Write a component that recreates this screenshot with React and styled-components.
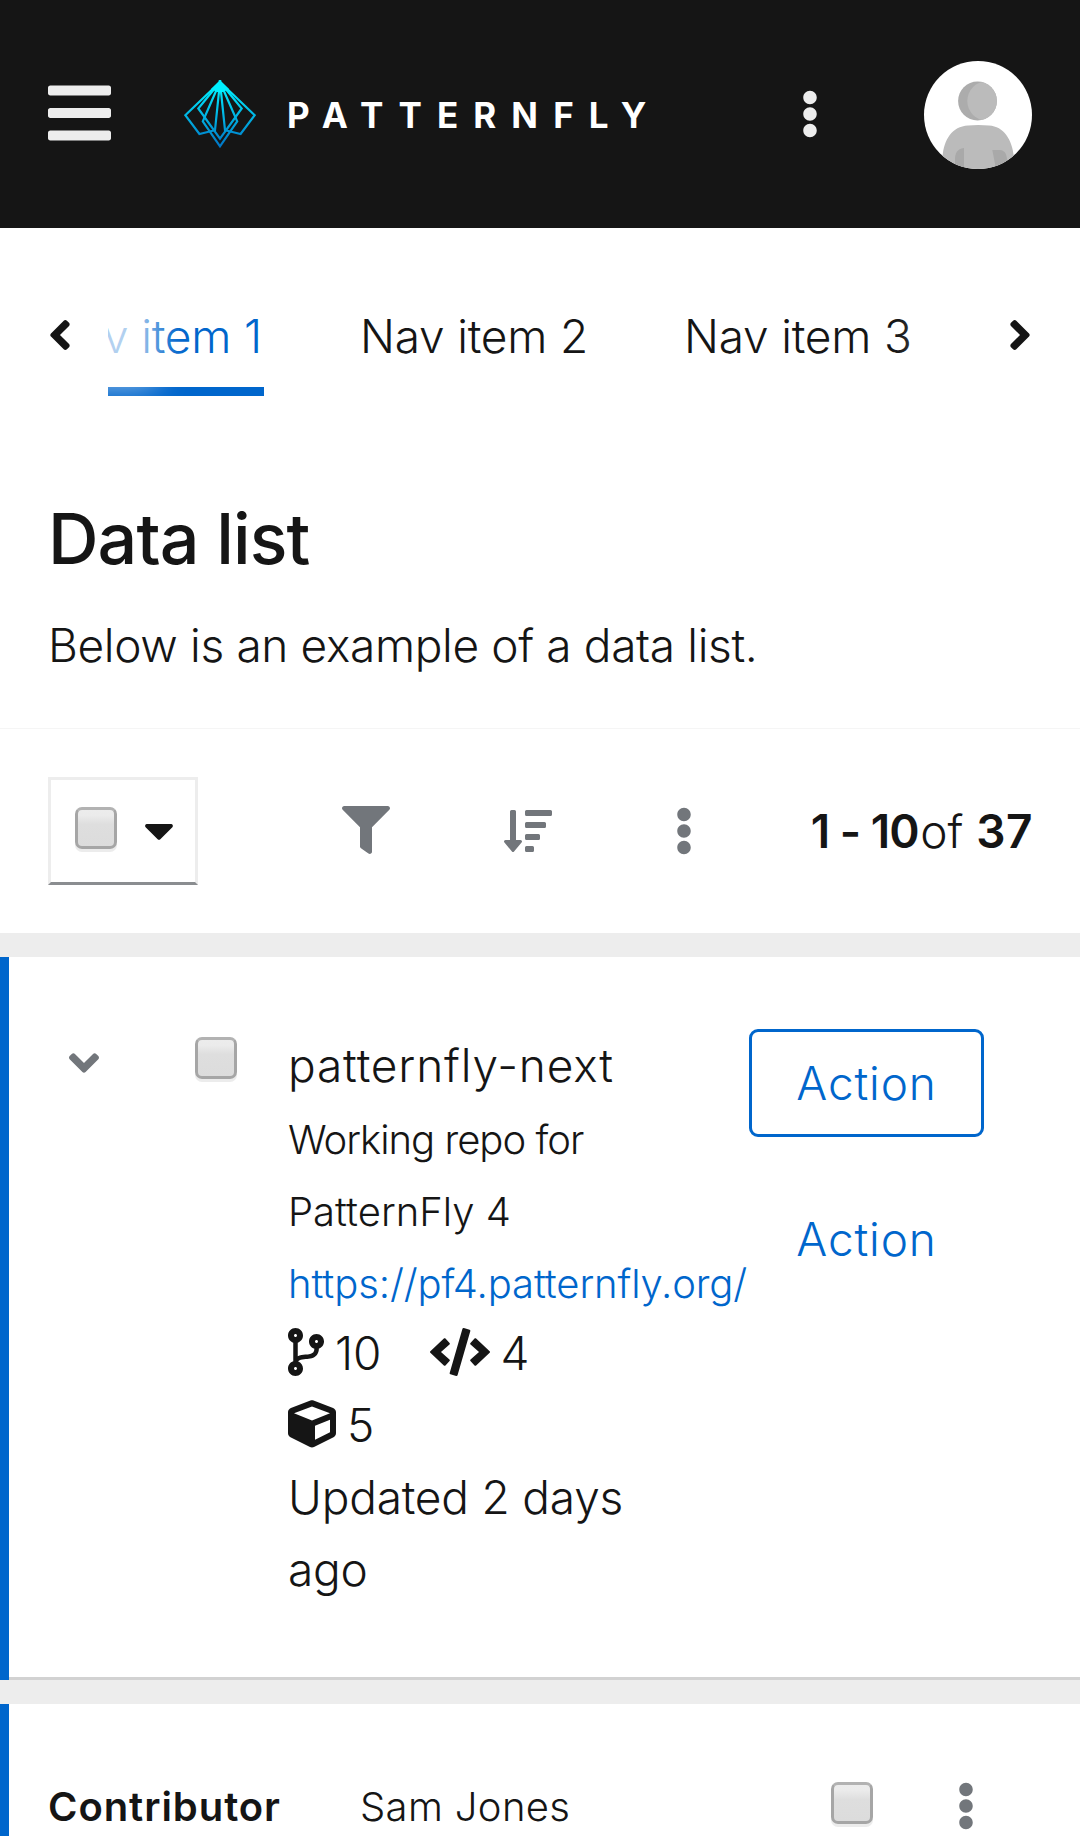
import React from "react";
import styled, { createGlobalStyle } from "styled-components";
import {
  FaBars, FaEllipsisV, FaAngleLeft, FaAngleRight, FaAngleDown, FaCaretDown,
  FaFilter, FaSortAmountDown, FaCodeBranch, FaCode, FaCube,
} from "react-icons/fa";

const GlobalStyle = createGlobalStyle`
  *, *::before, *::after { box-sizing: border-box; }
  body {
    margin: 0;
    background: #ededed;
    color: #151515;
    font-family: Inter, "Open Sans", sans-serif;
    font-size: 46px;
    font-weight: 320;
    line-height: 72px;
  }
  h1, p { margin: 0; }
  button { font: inherit; }
`;

const Page = styled.div`
  width: 1080px;
  height: 1836px;
  overflow: hidden;
  display: flex;
  flex-direction: column;
`;

const Icon = styled.span`
  display: inline-flex;
  flex: none;
  color: ${(p) => p.$color || "inherit"};
  svg {
    display: block;
    width: ${(p) => p.$w}px;
    height: ${(p) => p.$h || 48}px;
  }
`;

/* Masthead */
const Header = styled.header`
  flex: none;
  height: 228px;
  padding: 0 48px;
  display: flex;
  align-items: center;
  background: #151515;
  > ${Icon} { margin-bottom: 2px; }
`;
const Brand = styled.div`
  display: flex;
  align-items: center;
  margin-left: 73px;
`;
const BrandName = styled.span`
  margin: 2px 0 0 31px;
  color: #fff;
  font-size: 35px;
  font-weight: 700;
  letter-spacing: 15.1px;
`;
const HeaderTools = styled.div`
  margin-left: auto;
  display: flex;
  align-items: center;
  gap: 105px;
  > svg { margin-top: 2px; }
`;

/* Horizontal navigation */
const Nav = styled.nav`
  flex: none;
  display: flex;
  padding-top: 48px;
  background: #fff;
`;
const ScrollButton = styled.button`
  position: relative;
  z-index: 1;
  flex: none;
  width: 108px;
  height: 120px;
  padding: 0 48px;
  border: 0;
  background: #fff;
  color: #151515;
  display: flex;
  align-items: center;
  justify-content: ${(p) => (p.$side === "left" ? "flex-start" : "flex-end")};
  box-shadow: ${(p) => (p.$side === "left" ? "60px" : "-60px")} 0 30px -12px rgba(255, 255, 255, 0.7);
  ${Icon} { margin-bottom: 2px; }
`;
const NavList = styled.div`
  flex: 1;
  min-width: 0;
  overflow: hidden;
  display: flex;
  gap: 96px;
`;
const NavLink = styled.a`
  flex: none;
  width: 228px;
  height: 120px;
  padding-top: 24px;
  letter-spacing: -0.2px;
  white-space: nowrap;
  color: ${(p) => (p.$current ? "#06c" : "#151515")};
  box-shadow: ${(p) => (p.$current ? "inset 0 -9px 0 #06c" : "none")};
  &:first-child {
    margin-left: -72px;
    padding-left: 8px;
  }
`;

/* Title block */
const TitleSection = styled.section`
  flex: none;
  padding: 96px 48px 47px;
  background: #fff;
`;
const Title = styled.h1`
  font-size: 70px;
  font-weight: 500;
  line-height: 94px;
  letter-spacing: -0.9px;
`;
const Lead = styled.p`
  margin-top: 23px;
  letter-spacing: -0.35px;
`;

/* Toolbar */
const Toolbar = styled.div`
  flex: none;
  height: 205px;
  padding: 1px 48px 0;
  display: flex;
  align-items: center;
  background: #fff;
  box-shadow: inset 0 1px 0 #f5f5f5;
`;
const BulkSelect = styled.div`
  width: 150px;
  height: 108px;
  padding-left: 24px;
  display: flex;
  align-items: center;
  gap: 27px;
  border: 3px solid #ededed;
  border-bottom-color: #8a8d90;
  margin-right: 144px;
  > :first-child { margin-bottom: 6px; }
  > :last-child { margin-bottom: 2px; }
`;
const ToolbarIcons = styled.div`
  display: flex;
  align-items: center;
  color: #72767b;
  margin-bottom: 2px;
  > :nth-child(2) { margin: 1px 0 -1px 114px; }
  > :nth-child(3) { margin: 1px 0 -1px 123px; }
`;
const Pagination = styled.div`
  margin-left: auto;
  white-space: nowrap;
  b { font-weight: 600; }
`;
const Range = styled.b`
  letter-spacing: -1px;
  margin-right: 1.5px;
`;
const Total = styled.b`
  letter-spacing: 0.5px;
  margin: 0 -1px 0 0;
`;

const Checkbox = styled.span`
  flex: none;
  width: 42px;
  height: 42px;
  border: 3px solid #a6a6a6;
  border-top-color: #b2b2b2;
  border-radius: 7px;
  background: linear-gradient(#ececec 0%, #ebebeb 15%, #dedede 40%, #dcdcdc 100%);
  box-shadow: 0 3px 0 #ececec;
`;

/* Data list */
const List = styled.div`
  flex: none;
  padding-top: 24px;
  display: flex;
  flex-direction: column;
  gap: 24px;
`;
const Row = styled.article`
  display: flex;
  align-items: flex-start;
  height: ${(p) => p.$height}px;
  padding: ${(p) => p.$pad};
  background: #fff;
  box-shadow: inset 9px 0 0 #06c, inset 0 -3px 0 #d2d2d2;
`;
const Toggle = styled.div`
  width: 126px;
  padding-top: 10px;
  display: flex;
`;
const Check = styled.div`
  width: 93px;
  display: flex;
  padding-top: 8px;
`;
const Content = styled.div`
  width: 345px;
`;
const Name = styled.p`
  letter-spacing: 0.85px;
`;
const Description = styled.p`
  height: 72px;
  white-space: nowrap;
  small {
    font-size: 40px;
    letter-spacing: ${(p) => p.$track || 0}px;
  }
  a { color: #06c; }
`;
const Stats = styled.div`
  display: flex;
  flex-wrap: wrap;
  column-gap: 48px;
`;
const Stat = styled.span`
  height: 72px;
  display: flex;
  align-items: center;
  gap: 11px;
  ${Icon} { margin-bottom: 2px; }
`;
const Updated = styled.p`
  letter-spacing: -0.2px;
`;
const Actions = styled.div`
  margin-left: 116px;
  display: flex;
  flex-direction: column;
  gap: 48px;
`;
const ActionButton = styled.button`
  width: 235px;
  height: 108px;
  padding: 0;
  border: 3px solid ${(p) => (p.$outlined ? "#06c" : "transparent")};
  border-radius: 9px;
  background: transparent;
  color: #06c;
  letter-spacing: 0.85px;
`;
const Label = styled.div`
  width: 312px;
  font-size: 40px;
  font-weight: 600;
  letter-spacing: 0.94px;
`;
const Value = styled.div`
  width: 471px;
  font-size: 40px;
  letter-spacing: 0.35px;
`;
const RowTools = styled.div`
  display: flex;
  align-items: flex-start;
  gap: 84px;
  padding-top: 11px;
`;

function PatternFlyMark() {
  return (
    <svg width="72" height="68" viewBox="0 0 72 68" fill="none">
      <defs>
        <linearGradient id="wing" gradientUnits="userSpaceOnUse" x1="36" y1="0" x2="36" y2="68">
          <stop offset="0.1" stopColor="#00f0ff" />
          <stop offset="1" stopColor="#0072c4" />
        </linearGradient>
      </defs>
      <g stroke="url(#wing)" strokeWidth="2.2">
        <path d="M36 2 1.3 35.2 15.4 54 31 50.2Z" />
        <path d="M36 2 70.7 35.2 56.6 54 41 50.2Z" />
        <path d="M36 2 14.3 28.5 36 58.6 57.7 28.5Z" />
        <path d="M36 2 18.8 41.3 36 66.3 53.2 41.3Z" />
      </g>
      <path d="M36 .3 27 9l6 3h6l6-3z" fill="#00f0ff" />
    </svg>
  );
}

function Avatar() {
  return (
    <svg width="108" height="108" viewBox="0 0 108 108">
      <defs>
        <clipPath id="disc"><circle cx="54" cy="54" r="54" /></clipPath>
        <clipPath id="head"><circle cx="53.5" cy="40" r="19.4" /></clipPath>
      </defs>
      <g clipPath="url(#disc)">
        <rect width="108" height="108" fill="#fff" />
        <circle cx="53.5" cy="40" r="19.4" fill="#acacac" />
        <circle cx="63" cy="40" r="19.7" fill="#bbb" clipPath="url(#head)" />
        <path d="M18.5 96C20 78 28 65.5 44 64.4Q54 63.6 65 64.4C80 65.5 88 78 90 96V108H18.5Z" fill="#bbb" />
        <path d="M40 87C33 88 31 92 31 99V108H40ZM68.3 89H76C81 89.5 82.5 93 83 98V108H72Z" fill="#a9a9a9" />
      </g>
    </svg>
  );
}

export default function App() {
  return (
    <Page>
      <GlobalStyle />
      <Header>
        <Icon $w={63} $h={72} $color="#ededed"><FaBars /></Icon>
        <Brand>
          <PatternFlyMark />
          <BrandName>PATTERNFLY</BrandName>
        </Brand>
        <HeaderTools>
          <Icon $w={18} $color="#ededed"><FaEllipsisV /></Icon>
          <Avatar />
        </HeaderTools>
      </Header>

      <Nav>
        <ScrollButton $side="left"><Icon $w={24}><FaAngleLeft /></Icon></ScrollButton>
        <NavList>
          <NavLink $current>Nav item 1</NavLink>
          <NavLink>Nav item 2</NavLink>
          <NavLink>Nav item 3</NavLink>
        </NavList>
        <ScrollButton $side="right"><Icon $w={24}><FaAngleRight /></Icon></ScrollButton>
      </Nav>

      <TitleSection>
        <Title>Data list</Title>
        <Lead>Below is an example of a data list.</Lead>
      </TitleSection>

      <Toolbar>
        <BulkSelect>
          <Checkbox />
          <Icon $w={30}><FaCaretDown /></Icon>
        </BulkSelect>
        <ToolbarIcons>
          <Icon $w={48}><FaFilter /></Icon>
          <Icon $w={48}><FaSortAmountDown /></Icon>
          <Icon $w={18}><FaEllipsisV /></Icon>
        </ToolbarIcons>
        <Pagination><Range>1 - 10</Range>of <Total>37</Total></Pagination>
      </Toolbar>

      <List>
        <Row $height={723} $pad="72px 0 0 69px">
          <Toggle><Icon $w={30} $color="#72767b"><FaAngleDown /></Icon></Toggle>
          <Check><Checkbox /></Check>
          <Content>
            <Name>patternfly-next</Name>
            <Description $track={-1}><small>Working repo for</small></Description>
            <Description><small>PatternFly 4</small></Description>
            <Description $track={-0.1}><small><a>https://pf4.patternfly.org/</a></small></Description>
            <Stats>
              <Stat><Icon $w={36}><FaCodeBranch /></Icon>10</Stat>
              <Stat><Icon $w={60}><FaCode /></Icon>4</Stat>
              <Stat><Icon $w={48}><FaCube /></Icon>5</Stat>
            </Stats>
            <Updated>Updated 2 days ago</Updated>
          </Content>
          <Actions>
            <ActionButton $outlined>Action</ActionButton>
            <ActionButton>Action</ActionButton>
          </Actions>
        </Row>
        <Row $height={260} $pad="67px 0 0 48px">
          <Label>Contributor</Label>
          <Value>Sam Jones</Value>
          <RowTools>
            <Checkbox />
            <Icon $w={18} $color="#72767b"><FaEllipsisV /></Icon>
          </RowTools>
        </Row>
      </List>
    </Page>
  );
}
